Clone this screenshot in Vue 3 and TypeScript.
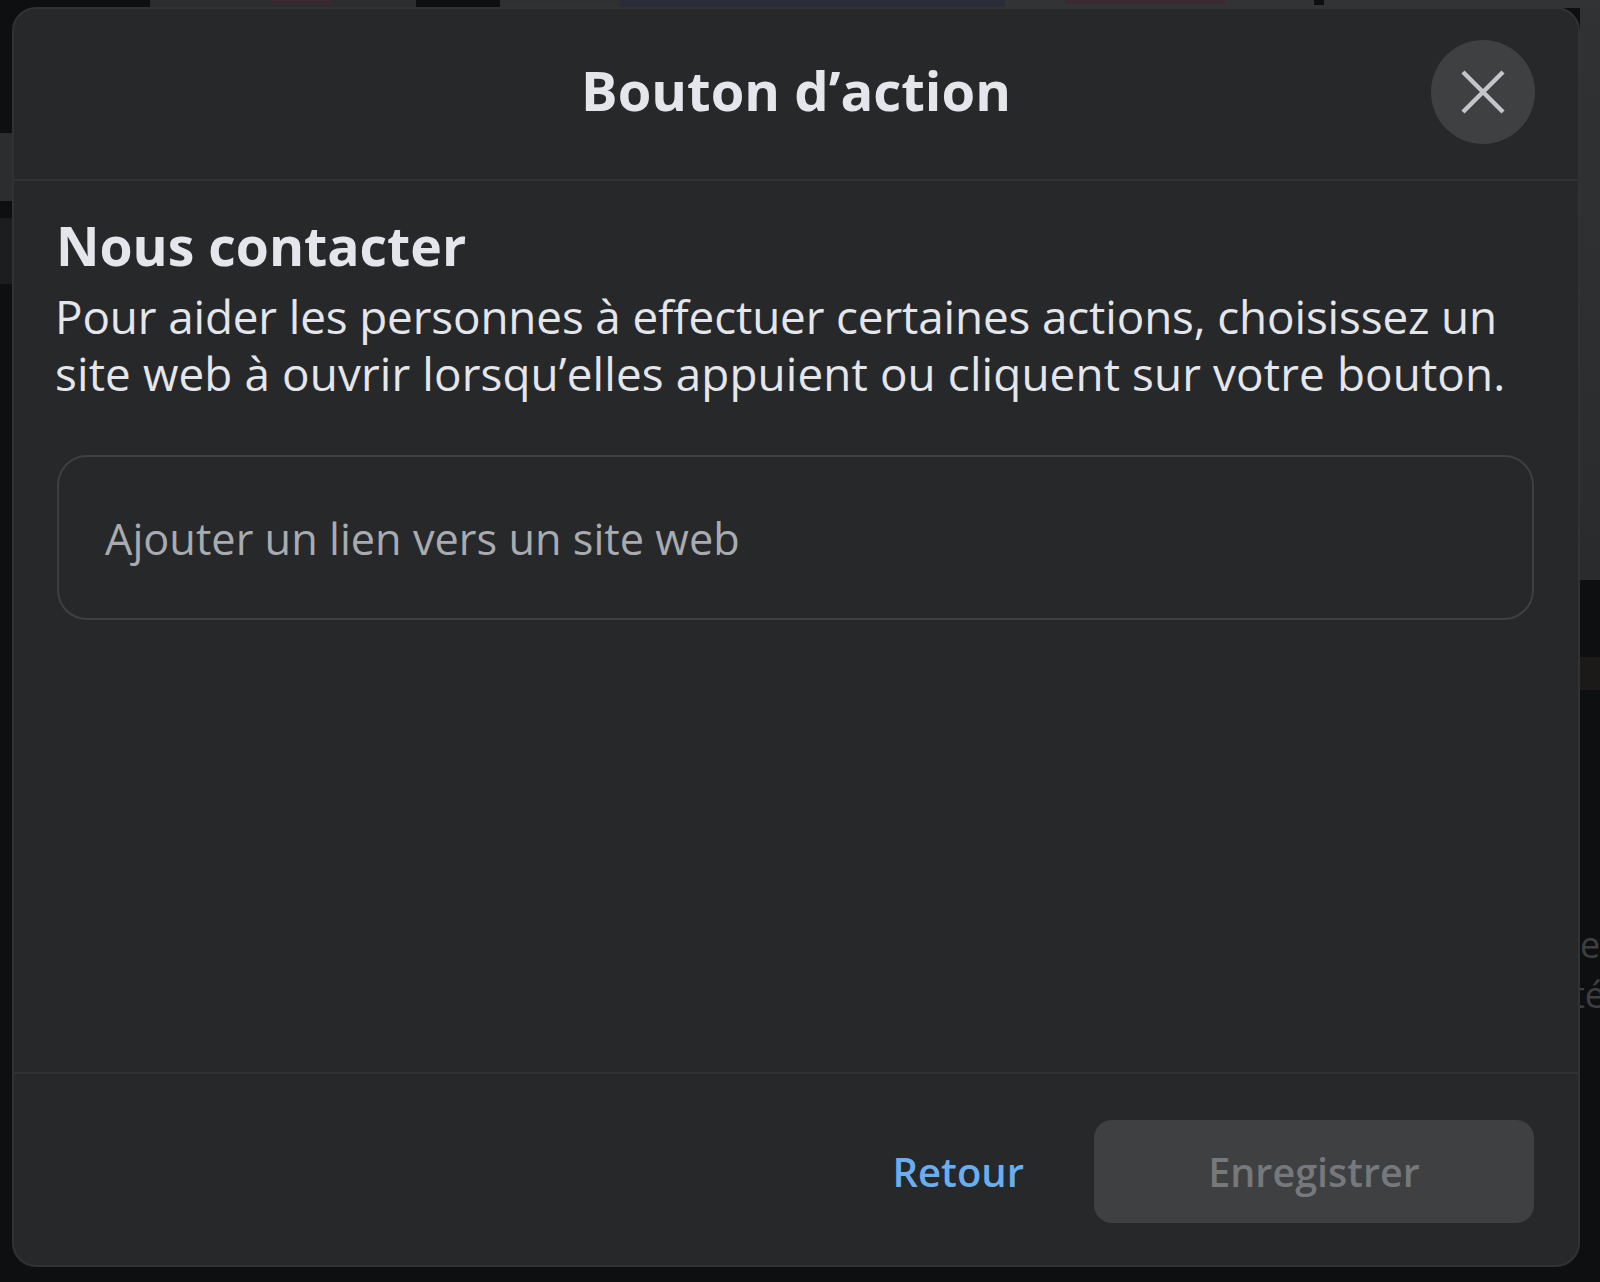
<script setup lang="ts">
const title = "Bouton d’action";
const heading = "Nous contacter";
const lineOne = "Pour aider les personnes à effectuer certaines actions, choisissez un";
const lineTwo = "site web à ouvrir lorsqu’elles appuient ou cliquent sur votre bouton.";
const placeholder = "Ajouter un lien vers un site web";
</script>

<template>
  <div class="page">
    <div class="backdrop">
      <span class="strip s1"></span>
      <span class="strip s1b"></span>
      <span class="strip s2"></span>
      <span class="strip s2b"></span>
      <span class="strip s3"></span>
      <span class="strip s3b"></span>
      <span class="strip s4"></span>
      <span class="strip s5"></span>
      <span class="strip s6"></span>
      <span class="strip s7"></span>
      <span class="strip s8"></span>
      <span class="ghost g1">e</span>
      <span class="ghost g2">té</span>
    </div>
    <section class="modal">
      <header class="head">
        <h1 class="title">{{ title }}</h1>
        <button class="close" type="button" aria-label="Fermer">
          <svg viewBox="0 0 44 44" width="44" height="44" aria-hidden="true">
            <path d="M2 2 L42 42 M42 2 L2 42" fill="none" stroke="#c4c6ca" stroke-width="4.4" />
          </svg>
        </button>
      </header>
      <div class="body">
        <h2 class="heading">{{ heading }}</h2>
        <p class="desc"><span class="line-a">{{ lineOne }}</span><br /><span class="line-b">{{ lineTwo }}</span></p>
        <div class="field"><span class="ph">{{ placeholder }}</span></div>
      </div>
      <footer class="foot">
        <a class="back">Retour</a>
        <button class="save" type="button" disabled>Enregistrer</button>
      </footer>
    </section>
  </div>
</template>

<style>
html, body { margin: 0; background: #0d0e0f; }
</style>

<style scoped>
.page {
  position: relative;
  width: 1600px;
  height: 1282px;
  overflow: hidden;
  background: #0e0f10;
  padding: 7px 20px 15px 12px;
  box-sizing: border-box;
  font-family: "Open Sans", "Noto Sans", sans-serif;
}
.backdrop { position: absolute; inset: 0; }
.strip { position: absolute; display: block; }
.s1 { left: 150px; top: 0; width: 266px; height: 8px; background: #2b2d2e; }
.s1b { left: 272px; top: 0; width: 60px; height: 4px; background: #3a2a30; }
.s2 { left: 500px; top: 0; width: 120px; height: 8px; background: #2e3032; }
.s2b { left: 620px; top: 0; width: 385px; height: 8px; background: #2b2c3a; }
.s3 { left: 0; top: 133px; width: 12px; height: 68px; background: #2c2d2e; }
.s3b { left: 0; top: 218px; width: 12px; height: 66px; background: #1c1d1e; }
.s4 { left: 1580px; top: 0; width: 20px; height: 580px; background: linear-gradient(#313234, #2a2b2c); }
.s5 { left: 1580px; top: 657px; width: 20px; height: 33px; background: #1c1a19; }
.s6 { left: 1005px; top: 0; width: 595px; height: 8px; background: #323335; }
.s7 { left: 1065px; top: 0; width: 160px; height: 4px; background: #3b2a32; }
.s8 { left: 1314px; top: 0; width: 10px; height: 5px; background: #0f0f10; }
.ghost { position: absolute; color: #3e3f41; font-size: 36px; left: 1580px; }
.g1 { top: 920px; }
.g2 { top: 970px; left: 1572px; }
.modal {
  position: relative;
  width: 1568px;
  height: 1260px;
  box-sizing: border-box;
  display: flex;
  flex-direction: column;
  background: #26282a;
  border: 2px solid #303234;
  border-radius: 24px;
  color: #e4e6eb;
}
.head {
  position: relative;
  height: 170px;
  flex: none;
  display: flex;
  align-items: center;
  justify-content: center;
  border-bottom: 2px solid #303234;
}
.title {
  margin: 0 0 6px;
  font-size: 54.4px;
  font-weight: 700;
  line-height: 1.2;
}
.close {
  position: absolute;
  right: 43px;
  top: 31px;
  width: 104px;
  height: 104px;
  padding: 0;
  border: 0;
  border-radius: 50%;
  background: #3e4042;
  display: flex;
  align-items: center;
  justify-content: center;
}
.body {
  flex: 1;
  padding: 32px 44px 0 43px;
}
.heading {
  margin: 0 0 9px -1px;
  font-size: 53.5px;
  font-weight: 700;
  line-height: 66px;
}
.desc {
  margin: 0 0 0 -2px;
  font-size: 45.8px;
  line-height: 57px;
  white-space: nowrap;
}
.line-a { letter-spacing: -0.13px; }
.line-b { letter-spacing: 0.12px; }
.field {
  margin-top: 53px;
  height: 165px;
  box-sizing: border-box;
  border: 2px solid #3e4042;
  border-radius: 30px;
  display: flex;
  align-items: center;
  padding: 2px 0 0 46px;
}
.ph {
  font-size: 43.3px;
  color: #a8abaf;
}
.foot {
  flex: none;
  height: 193px;
  box-sizing: border-box;
  border-top: 2px solid #303234;
  display: flex;
  align-items: center;
  justify-content: flex-end;
  padding: 3px 44px 0 0;
  gap: 70px;
}
.back {
  font-size: 40px;
  font-weight: 600;
  color: #6aaef0;
}
.save {
  width: 440px;
  height: 103px;
  border: 0;
  border-radius: 18px;
  background: #3e4042;
  color: #76787c;
  font-family: inherit;
  font-size: 39.5px;
  font-weight: 600;
  padding: 2px 0 0;
}
</style>
